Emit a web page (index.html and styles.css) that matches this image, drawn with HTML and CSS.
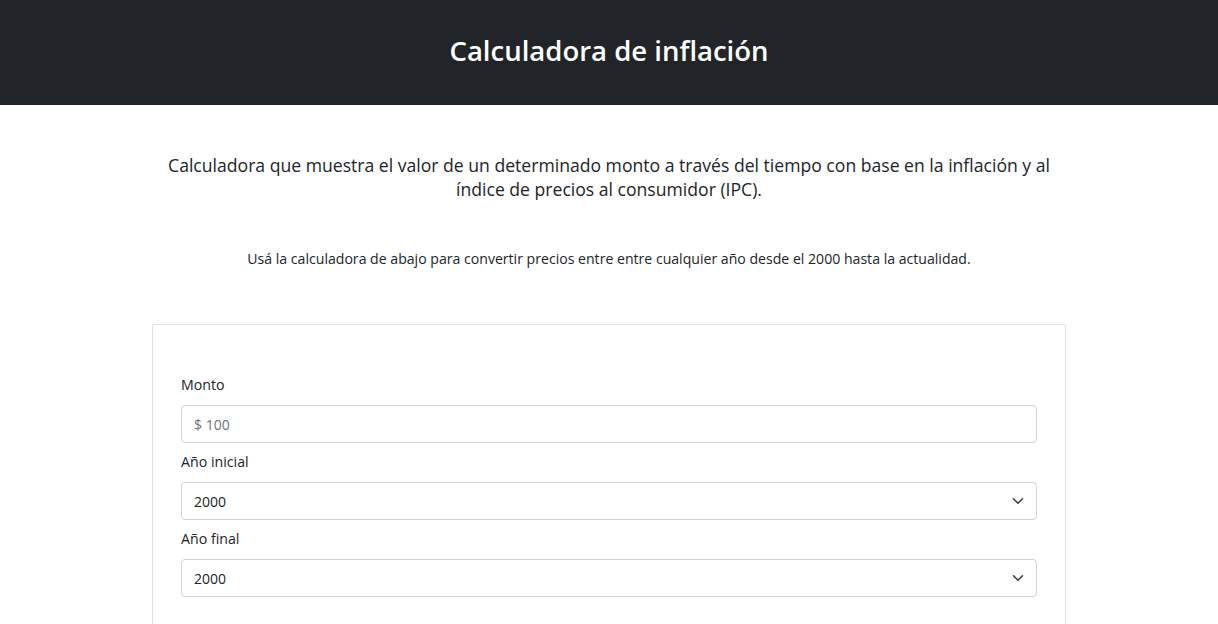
FILE: index.html
```html
<!DOCTYPE html>
<html lang="es">
<head>
<meta charset="utf-8">
<title>Calculadora de inflación</title>
<link rel="stylesheet" href="styles.css">
</head>
<body>
<header class="topbar">
  <h1 class="title">Calculadora de inflación</h1>
</header>
<main class="content">
  <p class="lead">Calculadora que muestra el valor de un determinado monto a través del tiempo con base en la inflación y al índice de precios al consumidor (IPC).</p>
  <p class="hint">Usá la calculadora de abajo para convertir precios entre entre cualquier año desde el 2000 hasta la actualidad.</p>
  <section class="card">
    <form class="form">
      <div class="group">
        <label class="label" for="monto">Monto</label>
        <input class="control" id="monto" type="text" placeholder="$ 100">
      </div>
      <div class="group">
        <label class="label" for="inicial">Año inicial</label>
        <div class="select-wrap">
          <select class="control select" id="inicial"><option>2000</option></select>
          <svg class="chev" viewBox="0 0 16 16" width="12" height="12"><path d="M2 5l6 6 6-6" fill="none" stroke="#343a40" stroke-width="2" stroke-linecap="round" stroke-linejoin="round"/></svg>
        </div>
      </div>
      <div class="group">
        <label class="label" for="final">Año final</label>
        <div class="select-wrap">
          <select class="control select" id="final"><option>2000</option></select>
          <svg class="chev" viewBox="0 0 16 16" width="12" height="12"><path d="M2 5l6 6 6-6" fill="none" stroke="#343a40" stroke-width="2" stroke-linecap="round" stroke-linejoin="round"/></svg>
        </div>
      </div>
    </form>
  </section>
</main>
</body>
</html>
```
FILE: styles.css
```css
* { box-sizing: border-box; }
html, body { margin: 0; padding: 0; }
body {
  font-family: "Open Sans", "Noto Sans", sans-serif;
  color: #212529;
  background: #fff;
  font-size: 16px;
  line-height: 1.5;
}
.topbar {
  background: #212529;
  height: 105px;
  display: flex;
  align-items: center;
  justify-content: center;
  padding-bottom: 4px;
}
.title {
  margin: 0;
  color: #fff;
  font-size: 27.5px;
  font-weight: 600;
  line-height: 1.2;
}
.content {
  display: flex;
  flex-direction: column;
  align-items: center;
  padding-top: 48px;
}
.lead {
  margin: 0;
  max-width: 892px;
  text-align: center;
  font-size: 17.6px;
  font-weight: 500;
  line-height: 24px;
}
.hint {
  margin: 46px 0 0;
  text-align: center;
  font-size: 14.1px;
  line-height: 24px;
}
.card {
  margin-top: 53px;
  width: 914px;
  border: 1px solid #dee2e6;
  border-radius: 2px;
  padding: 48px 28px 28px;
}
.group { margin-bottom: 7px; }
.label {
  display: block;
  margin-bottom: 8px;
  font-size: 14.2px;
  line-height: 24px;
}
.select-wrap { position: relative; }
.control {
  display: block;
  width: 100%;
  height: 38px;
  padding: 6px 12px;
  border: 1px solid #ced4da;
  border-radius: 4px;
  font-family: inherit;
  font-size: 14px;
  color: #212529;
  background: #fff;
  appearance: none;
  -webkit-appearance: none;
}
.control::placeholder { color: #6c757d; }
.chev {
  position: absolute;
  right: 13px;
  top: 13px;
  pointer-events: none;
}
```
